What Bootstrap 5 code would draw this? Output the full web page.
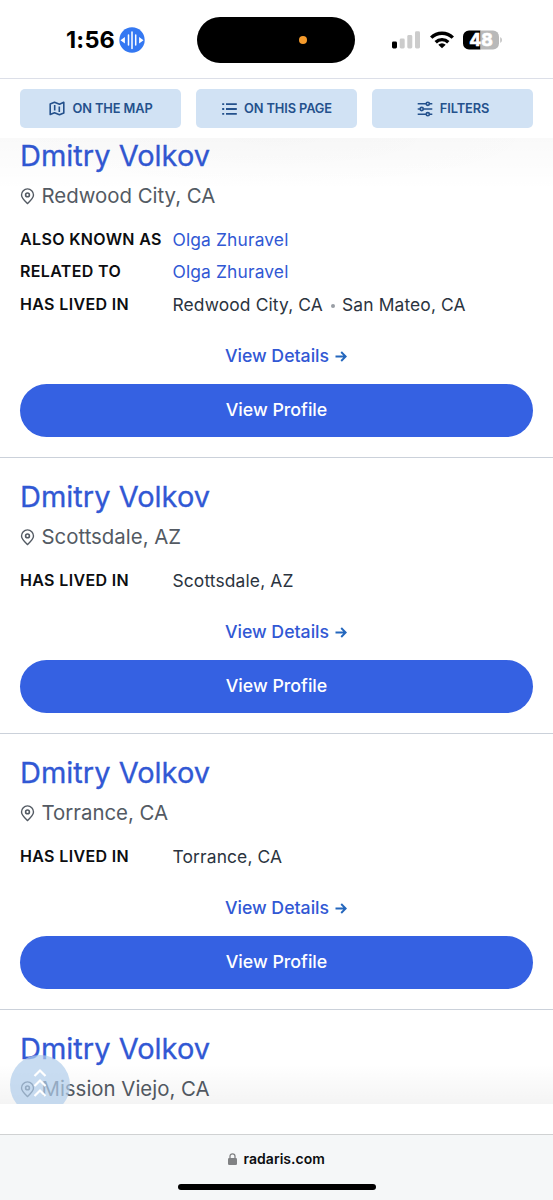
<!DOCTYPE html>
<html lang="en">
<head>
<meta charset="utf-8">
<meta name="viewport" content="width=device-width, initial-scale=1">
<title>Dmitry Volkov</title>
<link rel="stylesheet" href="https://cdn.jsdelivr.net/npm/bootstrap@5.3.0/dist/css/bootstrap.min.css">
<style>
  body { font-family: Inter, "Liberation Sans", sans-serif; color: #2b3440; }
  a { color: #3158d4; text-decoration: none; }
  .phone { width: 553px; height: 1200px; }
  .statusbar { height: 79px; border-bottom: 1px solid #dcdfe8; padding: 2px 51px 0 66px; }
  .clock { font-size: 23.5px; font-weight: 700; color: #000; letter-spacing: .2px; line-height: 28px; width: 53px; }
  .island { width: 158px; height: 46px; background: #000; border-radius: 23px; padding-right: 48px; margin-left: 52px; }
  .island span { width: 8px; height: 8px; background: #f59b2c; }
  .toolbar { height: 59px; padding: 10px 20px; gap: 15px; }
  .tool { background: #d1e2f4; color: #24518c; border-radius: 5px; height: 39px; font-size: 12.8px; font-weight: 600; gap: 7px; letter-spacing: -.1px; padding-left: 1px; }
  .results { height: 966px; }
  .scrolled { margin-top: -21px; }
  .result { padding: 21px 20px 20.5px; border-bottom: 1.5px solid #cbd1da; }
  .person { font-size: 29px; line-height: 36px; font-weight: 400; margin: 0 0 8px; -webkit-text-stroke: .3px #3158d4; }
  .place { font-size: 20.4px; line-height: 28px; color: #535a63; gap: 6.5px; margin-bottom: 13px; }
  .facts { line-height: 32.5px; font-size: 17.4px; letter-spacing: .14px; }
  .facts dt { width: 152.5px; font-size: 16px; font-weight: 600; color: #0c0d10; letter-spacing: .35px; margin-top: -.5px; }
  .facts dd { margin: 0; padding-top: .5px; height: 32.5px; }
  .facts dd.d-flex { padding-top: 1.5px; }
  .dot { width: 4px; height: 4px; background: #999ea5; margin: 2px 7.5px 0; }
  .details { margin-top: 21.5px; font-size: 17.7px; line-height: 28px; font-weight: 500; gap: 6px; padding-left: 19px; }
  .profile { margin-top: 14px; height: 52.5px; border-radius: 27px; background: #3561e2; color: #fff; font-size: 17.8px; font-weight: 500; padding-top: 1px; }
  .shade-top, .shade-bottom { left: 0; right: 0; pointer-events: none; }
  .shade-top { top: 0; height: 52px; background: radial-gradient(ellipse 52% 100% at 50% 0, rgba(0,0,0,.01), transparent), linear-gradient(rgba(0,0,0,.025), transparent); }
  .shade-bottom { bottom: 0; height: 40px; background: linear-gradient(transparent, rgba(0,0,0,.045)); }
  .to-top { left: 10px; top: 917px; width: 60px; height: 60px; background: rgba(176,205,235,.7); padding-top: 13px; }
  .gap-strip { height: 30px; }
  .browserbar { height: 66px; background: #f5f7f8; border-top: 1.5px solid #d0d2d3; padding-top: 13px; }
  .host { font-size: 14px; font-weight: 600; line-height: 22px; color: #0c0d10; gap: 6.5px; letter-spacing: .03px; }
  .home { width: 198px; height: 6px; background: #000; margin-top: 14px; }
</style>
</head>
<body>
<svg class="d-none">
  <symbol id="pin" viewBox="0 0 14 17"><path d="M7 15.6C3.4 12 1 9.7 1 6.9a6 6 0 0 1 12 0c0 2.800-2.400 5.100-6 8.700z" fill="none" stroke="currentColor" stroke-width="1.400"/><circle cx="7" cy="6.900" r="1.900" fill="none" stroke="currentColor" stroke-width="1.600"/></symbol>
  <symbol id="arrow" viewBox="0 0 12 12"><path d="M.5 6.500h10M6.200 2 10.700 6.500l-4.500 4.500" fill="none" stroke="#2467bd" stroke-width="1.900"/></symbol>
</svg>
<div class="phone d-flex flex-column bg-white overflow-hidden">
  <header class="statusbar d-flex align-items-center flex-shrink-0">
    <div class="clock">1:56</div>
    <svg width="26" height="26" viewBox="0 0 26 26"><circle cx="13" cy="13" r="12.700" fill="#3478f2"/><path d="M9.500 8v10M13 5v16.500M16.700 8v10" stroke="#fff" stroke-width="1.500" stroke-linecap="round"/><path d="M5.900 10v6.500L1.500 13.200zM20.100 10v6.500l4.400-3.300z" fill="#fff"/></svg>
    <div class="island d-flex align-items-center justify-content-end"><span class="rounded-circle"></span></div>
    <svg class="ms-auto" width="28" height="18" viewBox="0 0 28 18"><rect y="10.500" width="5" height="7" rx="1.400" fill="#000"/><g fill="#ccc"><rect x="7.700" y="7.500" width="5" height="10" rx="1.400"/><rect x="15.300" y="4" width="5" height="13.500" rx="1.400"/><rect x="23" y=".3" width="5" height="17.200" rx="1.400"/></g></svg>
    <svg style="margin-left:8.500px" width="26" height="20" viewBox="0 0 26 20"><g fill="none" stroke="#000" stroke-width="3.400"><path d="M2.200 7.600a15.500 15.500 0 0 1 21.600 0"/><path d="M6.700 12.200a9 9 0 0 1 12.600 0"/></g><path d="M13 18.300 9.300 14.700a5.300 5.300 0 0 1 7.400 0z" fill="#000"/></svg>
    <svg style="margin-left:8.500px;margin-right:-1px" width="40" height="20" viewBox="0 0 40 20"><path d="M6 .5h11.500v19H6a6 6 0 0 1-6-6v-7a6 6 0 0 1 6-6z" fill="#000"/><path d="M17.500.5H30a6 6 0 0 1 6 6v7a6 6 0 0 1-6 6H17.500z" fill="#b9b9b9"/><path d="M37.300 7.200c2 .5 2 5.100 0 5.600z" fill="#b9b9b9"/><text x="18" y="16.200" text-anchor="middle" font-size="17.800" font-weight="700" fill="#fff" stroke="#fff" stroke-width=".7">48</text></svg>
  </header>

  <nav class="toolbar d-flex flex-shrink-0">
    <a href="#" class="tool d-flex align-items-center justify-content-center flex-fill w-100"><svg width="16" height="15" viewBox="0 0 16 15" fill="none" stroke="currentColor" stroke-width="1.600" stroke-linejoin="round"><path d="M1.200 3 5.500 1.300 10.500 3.200 14.800 1.300V12L10.500 13.700 5.500 11.800 1.200 13.500zM5.700 4v5.500M10.300 5.500V11"/></svg>ON THE MAP</a>
    <a href="#" class="tool d-flex align-items-center justify-content-center flex-fill w-100"><svg width="15" height="12" viewBox="0 0 15 12" stroke="currentColor" stroke-width="1.800"><path d="M4 1.200H14.800M4 6H14.800M4 10.800H14.800M.2 1.200h2M.2 6h2M.2 10.800h2"/></svg>ON THIS PAGE</a>
    <a href="#" class="tool d-flex align-items-center justify-content-center flex-fill w-100"><svg width="16" height="16" viewBox="0 0 16 16" fill="none" stroke="currentColor" stroke-width="1.600"><path d="M.7 2.800H9M12.500 2.800h2.800M.7 8H3M6.500 8h8.800M.7 13.200H9M12.500 13.200h2.800"/><circle cx="10.800" cy="2.800" r="1.600"/><circle cx="4.700" cy="8" r="1.600"/><circle cx="10.800" cy="13.200" r="1.600"/></svg>FILTERS</a>
  </nav>

  <main class="results position-relative overflow-hidden flex-shrink-0">
    <div class="scrolled">
      <article class="result">
        <h2 class="person"><a href="#">Dmitry Volkov</a></h2>
        <div class="place d-flex align-items-center"><svg width="15" height="17"><use href="#pin"/></svg>Redwood City, CA</div>
        <dl class="facts mb-0">
          <div class="d-flex"><dt>ALSO KNOWN AS</dt><dd><a href="#">Olga Zhuravel</a></dd></div>
          <div class="d-flex"><dt>RELATED TO</dt><dd><a href="#">Olga Zhuravel</a></dd></div>
          <div class="d-flex"><dt>HAS LIVED IN</dt><dd class="d-flex align-items-center">Redwood City, CA<span class="dot rounded-circle"></span>San Mateo, CA</dd></div>
        </dl>
        <a href="#" class="details d-flex align-items-center justify-content-center">View Details<svg width="12" height="12"><use href="#arrow"/></svg></a>
        <a href="#" class="profile d-flex align-items-center justify-content-center">View Profile</a>
      </article>
      <article class="result">
        <h2 class="person"><a href="#">Dmitry Volkov</a></h2>
        <div class="place d-flex align-items-center"><svg width="15" height="17"><use href="#pin"/></svg>Scottsdale, AZ</div>
        <dl class="facts mb-0">
          <div class="d-flex"><dt>HAS LIVED IN</dt><dd>Scottsdale, AZ</dd></div>
        </dl>
        <a href="#" class="details d-flex align-items-center justify-content-center">View Details<svg width="12" height="12"><use href="#arrow"/></svg></a>
        <a href="#" class="profile d-flex align-items-center justify-content-center">View Profile</a>
      </article>
      <article class="result">
        <h2 class="person"><a href="#">Dmitry Volkov</a></h2>
        <div class="place d-flex align-items-center"><svg width="15" height="17"><use href="#pin"/></svg>Torrance, CA</div>
        <dl class="facts mb-0">
          <div class="d-flex"><dt>HAS LIVED IN</dt><dd>Torrance, CA</dd></div>
        </dl>
        <a href="#" class="details d-flex align-items-center justify-content-center">View Details<svg width="12" height="12"><use href="#arrow"/></svg></a>
        <a href="#" class="profile d-flex align-items-center justify-content-center">View Profile</a>
      </article>
      <article class="result">
        <h2 class="person"><a href="#">Dmitry Volkov</a></h2>
        <div class="place d-flex align-items-center"><svg width="15" height="17"><use href="#pin"/></svg>Mission Viejo, CA</div>
      </article>
    </div>
    <div class="shade-top position-absolute"></div>
    <div class="shade-bottom position-absolute"></div>
    <a href="#" class="to-top position-absolute rounded-circle d-flex justify-content-center" aria-label="Back to top"><svg width="14" height="30" viewBox="0 0 14 30" fill="none" stroke="#fff" stroke-width="2.200"><path d="M1.500 8 7 2.500 12.500 8M1.500 18 7 12.500 12.500 18M1.500 28 7 22.500 12.500 28"/></svg></a>
  </main>

  <div class="gap-strip flex-shrink-0"></div>
  <footer class="browserbar d-flex flex-column align-items-center flex-shrink-0">
    <div class="host d-flex align-items-center"><svg width="9" height="12" viewBox="0 0 9 12"><rect y="5" width="9" height="7" rx="1.300" fill="#808284"/><path d="M2 5.500V3.300a2.500 2.500 0 0 1 5 0v2.200" fill="none" stroke="#808284" stroke-width="1.300"/></svg>radaris.com</div>
    <div class="home rounded-pill"></div>
  </footer>
</div>
<script src="https://cdn.jsdelivr.net/npm/bootstrap@5.3.0/dist/js/bootstrap.bundle.min.js"></script>
</body>
</html>
